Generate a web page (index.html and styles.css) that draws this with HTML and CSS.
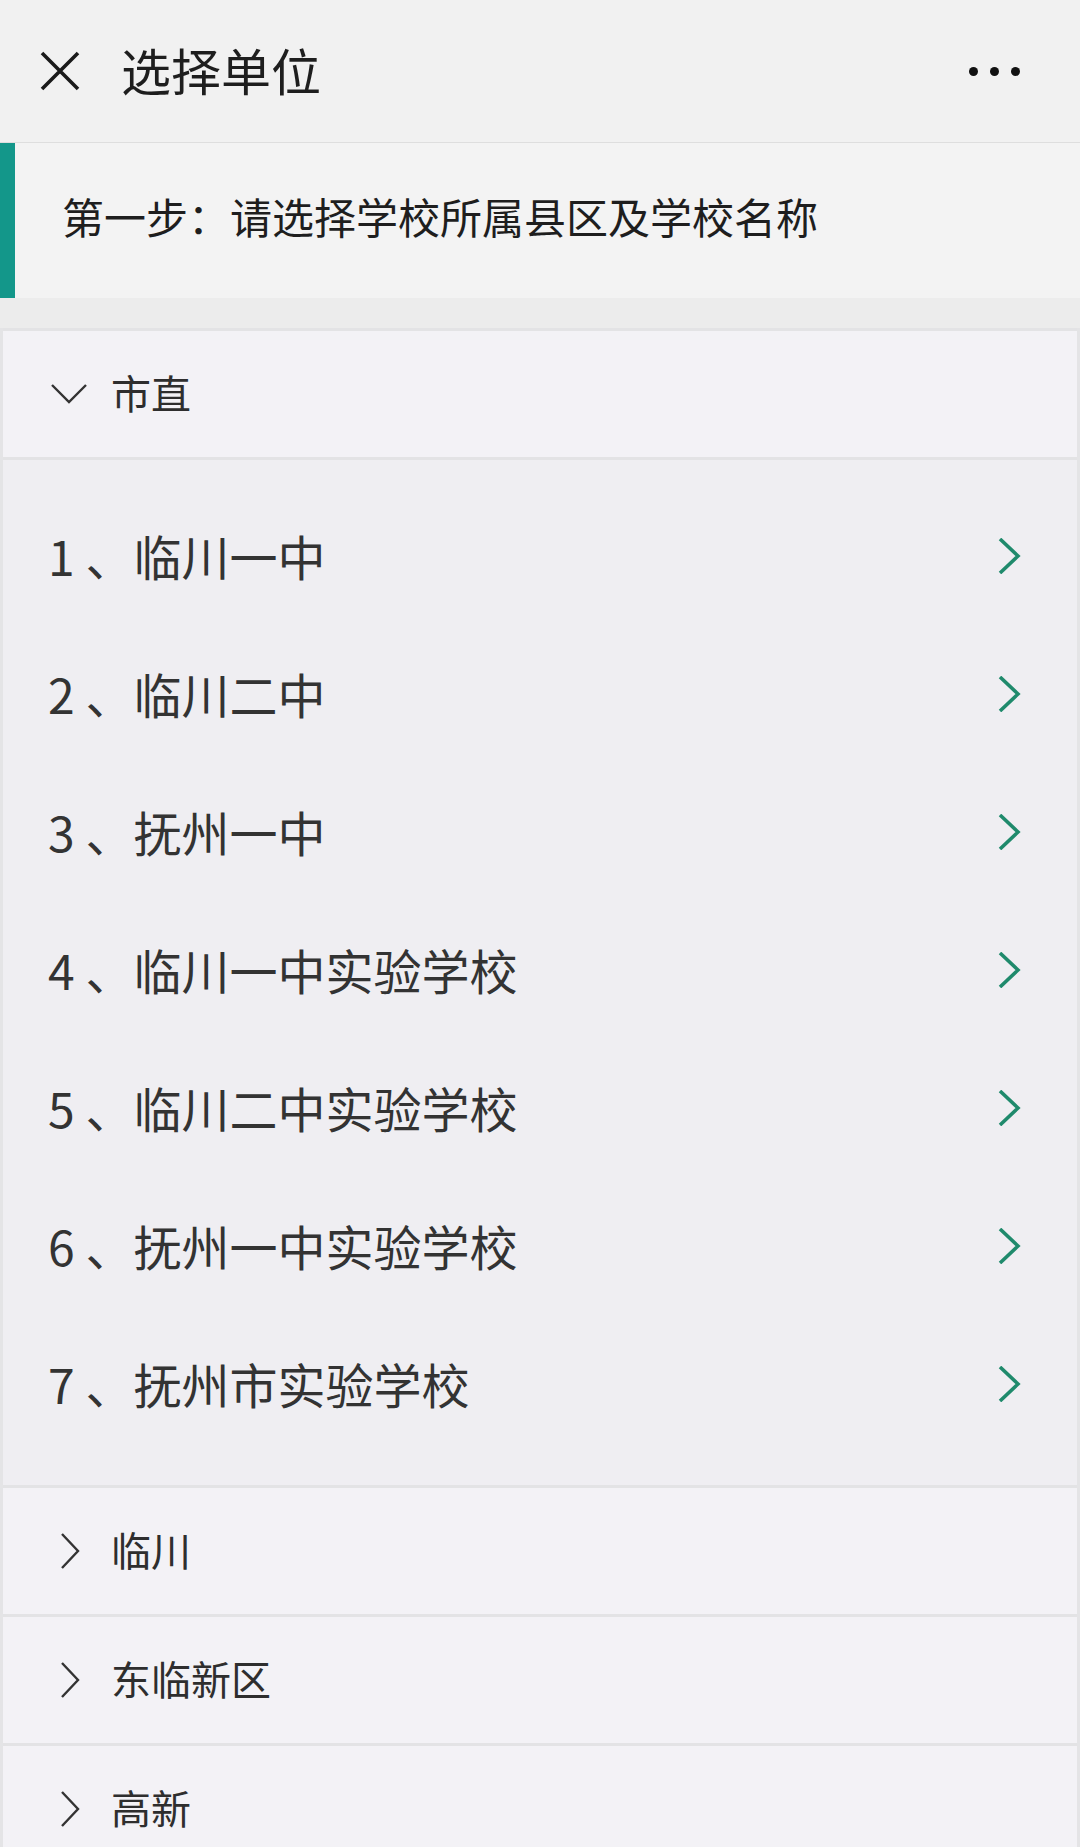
FILE: index.html
```html
<!DOCTYPE html>
<html lang="zh-CN">
<head>
<meta charset="utf-8">
<title>选择单位</title>
<link rel="stylesheet" href="styles.css">
</head>
<body>
<header class="topbar">
  <svg class="close" viewBox="0 0 42 42" width="42" height="42"><path d="M3 3 L39 39 M39 3 L3 39" stroke="#1a1a1a" stroke-width="3.6" fill="none" stroke-linecap="butt"/></svg>
  <h1 class="title">选择单位</h1>
  <div class="more"><span></span><span></span><span></span></div>
</header>
<div class="step"><span class="step-text">第一步：请选择学校所属县区及学校名称</span></div>
<div class="card">
  <section class="panel">
    <div class="panel-head">
      <span class="ico"><svg viewBox="0 0 36 22" width="36" height="22"><path d="M1 2 L18 19 L35 2" stroke="#333" stroke-width="2.4" fill="none"/></svg></span>
      <span class="panel-name">市直</span>
    </div>
    <div class="panel-body">
      <div class="item"><span class="item-text">1 、临川一中</span><svg viewBox="0 0 24 36" width="24" height="36"><path d="M3 1 L21 18 L3 35" stroke="#1f8a6c" stroke-width="3.6" fill="none"/></svg></div>
      <div class="item"><span class="item-text">2 、临川二中</span><svg viewBox="0 0 24 36" width="24" height="36"><path d="M3 1 L21 18 L3 35" stroke="#1f8a6c" stroke-width="3.6" fill="none"/></svg></div>
      <div class="item"><span class="item-text">3 、抚州一中</span><svg viewBox="0 0 24 36" width="24" height="36"><path d="M3 1 L21 18 L3 35" stroke="#1f8a6c" stroke-width="3.6" fill="none"/></svg></div>
      <div class="item"><span class="item-text">4 、临川一中实验学校</span><svg viewBox="0 0 24 36" width="24" height="36"><path d="M3 1 L21 18 L3 35" stroke="#1f8a6c" stroke-width="3.6" fill="none"/></svg></div>
      <div class="item"><span class="item-text">5 、临川二中实验学校</span><svg viewBox="0 0 24 36" width="24" height="36"><path d="M3 1 L21 18 L3 35" stroke="#1f8a6c" stroke-width="3.6" fill="none"/></svg></div>
      <div class="item"><span class="item-text">6 、抚州一中实验学校</span><svg viewBox="0 0 24 36" width="24" height="36"><path d="M3 1 L21 18 L3 35" stroke="#1f8a6c" stroke-width="3.6" fill="none"/></svg></div>
      <div class="item"><span class="item-text">7 、抚州市实验学校</span><svg viewBox="0 0 24 36" width="24" height="36"><path d="M3 1 L21 18 L3 35" stroke="#1f8a6c" stroke-width="3.6" fill="none"/></svg></div>
    </div>
  </section>
  <section class="panel">
    <div class="panel-head">
      <span class="ico"><svg viewBox="0 0 36 36" width="36" height="36"><path d="M11 1 L27 18 L11 35" stroke="#333" stroke-width="2.4" fill="none"/></svg></span>
      <span class="panel-name">临川</span>
    </div>
  </section>
  <section class="panel">
    <div class="panel-head">
      <span class="ico"><svg viewBox="0 0 36 36" width="36" height="36"><path d="M11 1 L27 18 L11 35" stroke="#333" stroke-width="2.4" fill="none"/></svg></span>
      <span class="panel-name">东临新区</span>
    </div>
  </section>
  <section class="panel">
    <div class="panel-head">
      <span class="ico"><svg viewBox="0 0 36 36" width="36" height="36"><path d="M11 1 L27 18 L11 35" stroke="#333" stroke-width="2.4" fill="none"/></svg></span>
      <span class="panel-name">高新</span>
    </div>
  </section>
</div>
</body>
</html>
```

FILE: styles.css
```css
html, body {
  margin: 0;
  padding: 0;
}
body {
  background: #ececec;
  font-family: "Noto Sans CJK SC", "Noto Sans", sans-serif;
  color: #333;
}
.topbar {
  height: 142px;
  background: #f1f1f1;
  border-bottom: 1px solid #dedede;
  display: flex;
  align-items: center;
  padding-left: 39px;
  padding-right: 60px;
}
.close {
  display: block;
  flex: none;
}
.title {
  margin: 0 0 0 40px;
  padding-bottom: 4px;
  font-size: 50px;
  font-weight: 400;
  color: #1e1e1e;
  line-height: 1;
  flex: 1;
}
.more {
  display: flex;
  gap: 12px;
}
.more span {
  width: 9px;
  height: 9px;
  border-radius: 50%;
  background: #111;
}
.step {
  height: 155px;
  box-sizing: border-box;
  background: #f3f3f3;
  border-left: 15px solid #13978a;
  padding-left: 47px;
  padding-bottom: 10px;
  display: flex;
  align-items: center;
  font-size: 42px;
  color: #1e1e1e;
}
.card {
  margin-top: 30px;
  border-left: 3px solid #e4e4e6;
  border-right: 3px solid #e4e4e6;
}
.panel {
  border-top: 3px solid #e3e3e5;
}
.panel-head {
  height: 126px;
  background: #f3f2f6;
  display: flex;
  align-items: center;
  padding-left: 48px;
}
.ico {
  width: 36px;
  display: flex;
  justify-content: center;
}
.ico svg {
  display: block;
}
.panel-name {
  margin-left: 24px;
  padding-bottom: 5px;
  font-size: 40px;
  color: #2e2e2e;
}
.panel-body {
  border-top: 3px solid #e3e3e5;
  background: #efeef2;
  padding: 27px 0 32px;
}
.item {
  height: 138px;
  display: flex;
  align-items: center;
  justify-content: space-between;
  padding-left: 45px;
  padding-right: 56px;
  font-size: 48px;
  color: #333;
}
.item-text {
  padding-bottom: 2px;
}
.item svg {
  display: block;
}
```
